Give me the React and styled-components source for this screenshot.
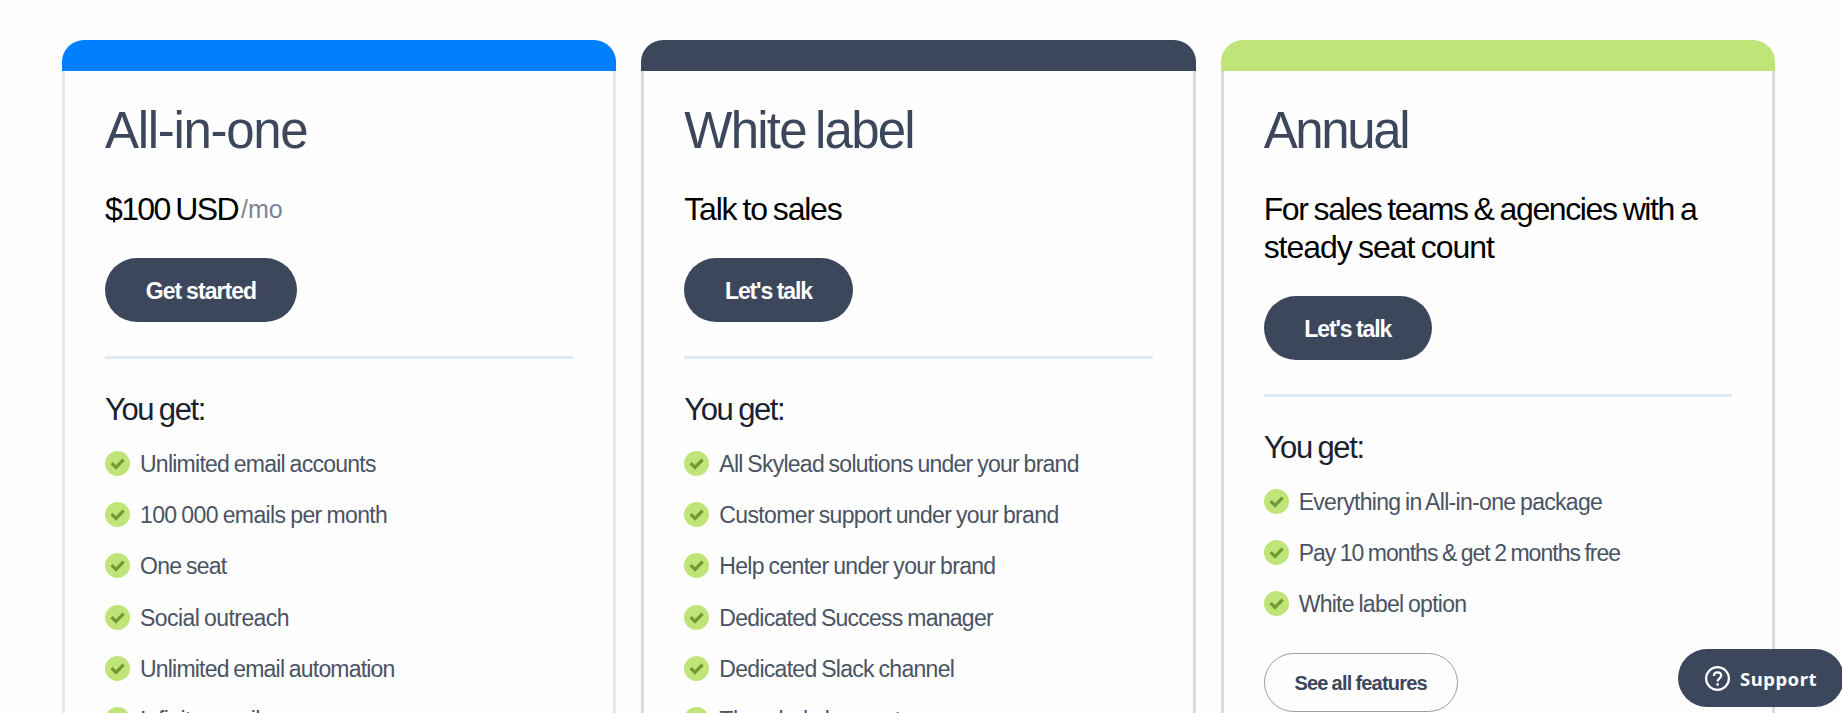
import React from "react";
import styled, { createGlobalStyle } from "styled-components";

const plans = [
  {
    title: "All-in-one",
    titleSpacing: -1.3,
    price: [{ text: "$100 USD", spacing: -1.65 }],
    period: "/mo",
    button: "Get started",
    buttonSpacing: -0.95,
    accent: "#0080ff",
    border: "#dcebf5",
    features: [
      { text: "Unlimited email accounts", spacing: -0.75 },
      { text: "100 000 emails per month", spacing: -0.61 },
      { text: "One seat", spacing: -0.74 },
      { text: "Social outreach", spacing: -0.57 },
      { text: "Unlimited email automation", spacing: -0.8 },
      { text: "Infinite email warm-up", spacing: -0.6 },
    ],
  },
  {
    title: "White label",
    titleSpacing: -1.8,
    price: [{ text: "Talk to sales", spacing: -1.23 }],
    button: "Let's talk",
    buttonSpacing: -1.15,
    accent: "#3c475c",
    border: "#d8dadc",
    features: [
      { text: "All Skylead solutions under your brand", spacing: -0.74 },
      { text: "Customer support under your brand", spacing: -0.64 },
      { text: "Help center under your brand", spacing: -0.68 },
      { text: "Dedicated Success manager", spacing: -0.74 },
      { text: "Dedicated Slack channel", spacing: -0.71 },
      { text: "The whole logo set", spacing: -0.5 },
    ],
  },
  {
    title: "Annual",
    titleSpacing: -2.4,
    price: [
      { text: "For sales teams & agencies with a", spacing: -1.38 },
      { text: "steady seat count", spacing: -1.04 },
    ],
    button: "Let's talk",
    buttonSpacing: -1.15,
    accent: "#bfe478",
    border: "#d8dadc",
    features: [
      { text: "Everything in All-in-one package", spacing: -0.69 },
      { text: "Pay 10 months & get 2 months free", spacing: -0.97 },
      { text: "White label option", spacing: -0.73 },
    ],
    more: "See all features",
  },
];

const Check = () => (
  <CheckIcon viewBox="0 0 25 25">
    <circle cx="12.5" cy="12.5" r="12.5" fill="#bfe478" />
    <path
      d="M6.6 12.2 L11 16.4 L18.6 8.6"
      fill="none"
      stroke="#6f9a35"
      strokeWidth="3.2"
    />
  </CheckIcon>
);

const App = () => {
  return (
    <>
      <GlobalStyle />
      <Container>
        {plans.map((plan) => (
          <Card key={plan.title}>
            <Accent $color={plan.accent} />
            <Body $border={plan.border}>
              <Title $spacing={plan.titleSpacing}>{plan.title}</Title>
              <PriceRow>
                <div>
                  {plan.price.map((line) => (
                    <Price key={line.text} $spacing={line.spacing}>
                      {line.text}
                    </Price>
                  ))}
                </div>
                {plan.period && <Period>{plan.period}</Period>}
              </PriceRow>
              <Button $spacing={plan.buttonSpacing}>{plan.button}</Button>
              <Divider />
              <Subtitle>You get:</Subtitle>
              <Features>
                {plan.features.map((feature) => (
                  <Feature key={feature.text}>
                    <Check />
                    <FeatureText $spacing={feature.spacing}>
                      {feature.text}
                    </FeatureText>
                  </Feature>
                ))}
              </Features>
              {plan.more && <MoreButton>{plan.more}</MoreButton>}
            </Body>
          </Card>
        ))}
      </Container>
      <Support>
        <SupportIcon viewBox="0 0 25 25">
          <circle cx="12.5" cy="12.5" r="11.4" strokeWidth="2.2" />
          <path
            d="M8.9 9.9 C8.9 5.2 16.2 5.3 16.2 9.8 C16.2 12.5 12.6 12.5 12.6 15.6"
            strokeWidth="2.2"
          />
          <path d="M12.6 17.2 V19.6" strokeWidth="2.4" />
        </SupportIcon>
        Support
      </Support>
    </>
  );
};

const GlobalStyle = createGlobalStyle`
  * {
    box-sizing: border-box;
  }
  body {
    margin: 0;
    background-color: #fefefe;
    font-family: "Liberation Sans", Arial, sans-serif;
  }
`;
const Container = styled.div`
  display: grid;
  grid-template-columns: repeat(3, 1fr);
  column-gap: 25px;
  height: 100vh;
  overflow: hidden;
  padding: 40px 67px 0 62px;
`;
const Card = styled.div`
  display: flex;
  flex-direction: column;
  min-height: 0;
`;
const Accent = styled.div`
  height: 31px;
  flex-shrink: 0;
  border-radius: 22px 22px 0 0;
  background-color: ${(p) => p.$color};
`;
const Body = styled.div`
  display: flex;
  flex-direction: column;
  align-items: flex-start;
  flex: 1;
  padding: 29px 40px 0;
  border: 3px solid ${(p) => p.$border};
  border-width: 0 3px;
`;
const Title = styled.h2`
  margin: 0 0 28px;
  color: #3c475c;
  font-size: 51px;
  font-weight: 400;
  line-height: 62px;
  letter-spacing: ${(p) => p.$spacing}px;
  word-spacing: -3px;
`;
const PriceRow = styled.div`
  display: flex;
  align-items: center;
  margin-bottom: 30px;
`;
const Price = styled.div`
  color: #000;
  font-size: 32px;
  line-height: 38px;
  white-space: nowrap;
  letter-spacing: ${(p) => p.$spacing}px;
  word-spacing: -1.5px;
`;
const Period = styled.span`
  margin-left: 3px;
  color: #7c8494;
  font-size: 25px;
  line-height: 28px;
`;
const Button = styled.button`
  flex-shrink: 0;
  height: 64px;
  padding: 2px 40.7px 0;
  border: none;
  border-radius: 32px;
  background-color: #3c475c;
  color: #fff;
  font-family: inherit;
  font-size: 23px;
  font-weight: 700;
  letter-spacing: ${(p) => p.$spacing}px;
  word-spacing: -0.5px;
`;
const Divider = styled.div`
  width: 100%;
  height: 3px;
  flex-shrink: 0;
  margin: 34px 0 32px;
  background-color: #deebf3;
`;
const Subtitle = styled.h3`
  margin: 0 0 10px;
  color: #1a2230;
  font-size: 31px;
  font-weight: 400;
  line-height: 37px;
  letter-spacing: -1.4px;
  word-spacing: -1.5px;
`;
const Features = styled.ul`
  margin: 0;
  padding: 0;
  list-style: none;
`;
const Feature = styled.li`
  display: flex;
  align-items: center;
  height: 51.2px;
`;
const FeatureText = styled.span`
  padding-top: 1px;
  color: #4a5364;
  font-size: 23px;
  line-height: 26px;
  white-space: nowrap;
  letter-spacing: ${(p) => p.$spacing}px;
  word-spacing: -1px;
`;
const CheckIcon = styled.svg`
  width: 25px;
  height: 25px;
  margin-right: 10px;
`;
const MoreButton = styled.button`
  flex-shrink: 0;
  height: 59px;
  margin-top: 23px;
  padding: 2px 29.8px 0;
  border: 1px solid #9a9da3;
  border-radius: 30px;
  background-color: transparent;
  color: #3c475c;
  font-family: inherit;
  font-size: 20px;
  font-weight: 700;
  letter-spacing: -0.8px;
  word-spacing: -0.8px;
`;
const Support = styled.button`
  position: fixed;
  right: -2px;
  bottom: 6px;
  display: flex;
  align-items: center;
  gap: 10px;
  width: 166px;
  height: 58px;
  padding: 0 0 0 27px;
  border: none;
  border-radius: 29px;
  background-color: #3c475c;
  color: #fff;
  font-family: "Noto Sans", sans-serif;
  font-size: 18.5px;
  font-weight: 700;
  letter-spacing: 0.5px;
`;
const SupportIcon = styled.svg`
  width: 25px;
  height: 25px;
  fill: none;
  stroke: #fff;
`;

export default App;
